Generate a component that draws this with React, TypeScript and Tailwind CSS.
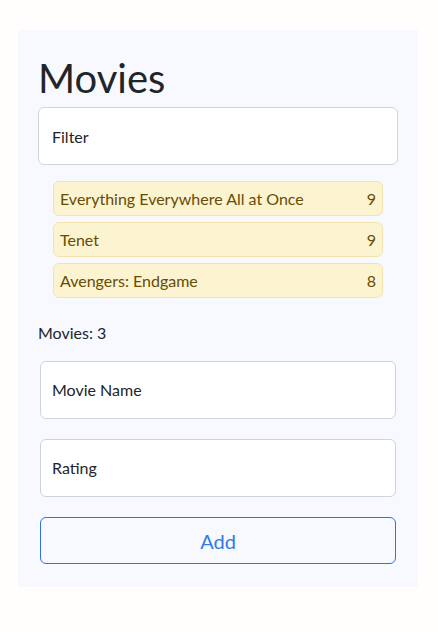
import React from "react"

const movies = [
  { name: "Everything Everywhere All at Once", rating: 9 },
  { name: "Tenet", rating: 9 },
  { name: "Avengers: Endgame", rating: 8 },
]

export default function App() {
  return (
    <div className="min-h-screen bg-[#fffefc] pt-[30px] font-['Lato',sans-serif] text-[#212529]">
      <div className="mx-[18px] w-[400px] bg-[#f8f9fe] px-5 pb-[23px] pt-[20px]">
        <h1 className="mb-[1px] text-[40px] leading-[56px]">Movies</h1>
        <div className="flex h-[58px] items-center rounded-md border border-[#ced4da] bg-white px-[13px] pt-[1px] text-[16px]">
          Filter
        </div>
        <ul className="mx-[15px] mt-[16px] flex flex-col gap-[6px]">
          {movies.map((m) => (
            <li
              key={m.name}
              className="flex h-[35px] items-center justify-between rounded-md border border-[#f2e4ad] bg-[#fcf3d0] px-[6px] text-[16px] text-[#664d03]"
            >
              <span>{m.name}</span>
              <span>{m.rating}</span>
            </li>
          ))}
        </ul>
        <p className="mt-[23px] text-[16px] leading-6">Movies: 3</p>
        <div className="mx-[2px] mt-[16px] flex flex-col">
          <div className="flex h-[58px] items-center rounded-md border border-[#ced4da] bg-white px-[11px] text-[16px]">
            Movie Name
          </div>
          <div className="mt-[20px] flex h-[58px] items-center rounded-md border border-[#ced4da] bg-white px-[11px] text-[16px]">
            Rating
          </div>
          <button className="mt-[20px] h-[47px] rounded-md border border-[#2f73e0] text-[20px] text-[#2f7ce8]">
            Add
          </button>
        </div>
      </div>
    </div>
  )
}
